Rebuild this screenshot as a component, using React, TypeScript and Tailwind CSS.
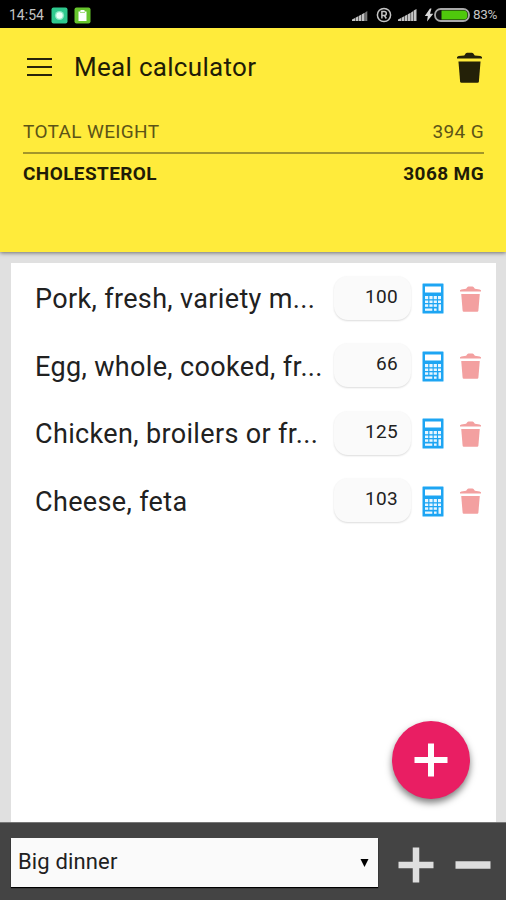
import { useState } from "react";

interface MealItem {
  id: number; name: string; grams: string;
}

const initialItems: MealItem[] = [
  { id: 1, name: "Pork, fresh, variety m...", grams: "100" },
  { id: 2, name: "Egg, whole, cooked, fr...", grams: "66" },
  { id: 3, name: "Chicken, broilers or fr...", grams: "125" },
  { id: 4, name: "Cheese, feta", grams: "103" },
];

function SignalIcon({ empty }: { empty?: boolean }) {
  return (
    <svg width="19" height="14" viewBox="0 0 19 14" fill="#c4c4c4">
      <path d="M0 13v-1.500L3 10v3zM3.500 13V9.700L6.200 8.300V13zM6.700 13V8L9.400 6.500V13zM9.900 13V6.200L12.600 4.700V13z" />
      <path d="M13.100 13V4.400L15.300 3v10z" fill={empty ? "#777" : "#c4c4c4"} />
      {!empty && <path d="M15.700 13V2.600L18.500 1v12z" />}
    </svg>
  );
}

function TrashIcon({ className }: { className: string }) {
  return (
    <svg className={className} viewBox="0 0 24 30" preserveAspectRatio="none" fill="currentColor">
      <path d="M0 6.400V4.900L1.500 3.900L7 3.300L8.500 1.200Q9 .7 9.700 .7h4.600q.7 0 1.200 .5l1.500 2.100l5.500 .6L24 4.900v1.500z" />
      <path d="M1.400 9.200h21.200l-1.600 19.300q-.1 1.200-1.300 1.200H4.300q-1.200 0-1.300-1.200z" />
    </svg>
  );
}

function CalculatorIcon() {
  return (
    <svg width="22" height="31" viewBox="0 0 22 31">
      <rect x="0.500" y="0.500" width="21" height="30" rx="0.500" fill="#1da5f3" />
      <g fill="#e8f6ff">
        <rect x="3" y="3.500" width="16" height="6" fill="#fff" />
        <rect x="3" y="13" width="3.200" height="3.200" />
        <rect x="7.400" y="13" width="3.200" height="3.200" />
        <rect x="11.700" y="13" width="3.200" height="3.200" />
        <rect x="16" y="13" width="3" height="3.200" />
        <rect x="3" y="17.500" width="3.200" height="2.500" />
        <rect x="7.400" y="17.500" width="3.200" height="2.500" />
        <rect x="11.700" y="17.500" width="3.200" height="2.500" />
        <rect x="16" y="17.500" width="3" height="2.500" />
        <rect x="3" y="21.300" width="3.200" height="2.500" />
        <rect x="7.400" y="21.300" width="3.200" height="2.500" />
        <rect x="11.700" y="21.300" width="3.200" height="2.500" />
        <rect x="3" y="25.500" width="7.300" height="2.300" />
        <rect x="12" y="25.500" width="2.600" height="2.300" />
        <rect x="16.500" y="21.300" width="2.500" height="6.500" />
      </g>
    </svg>
  );
}

function StatusBar() {
  return (
    <div className="h-7 bg-black flex items-center pl-[9px] pr-[7px] pt-[2px] text-[#c4c4c4]">
      <span className="w-[36px] mr-[6px] text-[14px] leading-none whitespace-nowrap">14:54</span>
      <svg className="mr-[6px]" width="17" height="17" viewBox="0 0 17 17">
        <rect x="0.500" y="0.500" width="16" height="16" rx="2" fill="#2fc98e" />
        <circle cx="8.500" cy="8.500" r="4.600" fill="#8be8c4" />
        <circle cx="8.500" cy="8.500" r="3.200" fill="#e6fff5" />
      </svg>
      <svg width="17" height="17" viewBox="0 0 17 17">
        <rect x="0.500" y="0.500" width="16" height="16" rx="2" fill="#67c52d" />
        <path d="M4.500 4.500h2V3h4v1.500h2v9.500h-8z" fill="#fff" />
        <path d="M6 5.500h5" stroke="#a5df80" strokeWidth="1" />
      </svg>
      <div className="flex-1" />
      <SignalIcon empty />
      <svg className="ml-[5px] mr-[6px]" width="16" height="16" viewBox="0 0 16 16" fill="none" stroke="#c4c4c4">
        <circle cx="8" cy="8" r="6.600" strokeWidth="1.500" />
        <path d="M5.900 11.500v-7h2.400a2 2 0 0 1 0 4H5.900M8.400 8.500l1.900 3" strokeWidth="1.500" />
      </svg>
      <SignalIcon />
      <svg className="ml-[7px]" width="10" height="14" viewBox="0 0 10 14" fill="#d8d8d8">
        <path d="M6 0.500L0.800 8h3L3 13.500 9.300 5.800H6L7.500 0.500z" />
      </svg>
      <svg className="mr-[3px]" width="36" height="14" viewBox="0 0 36 14">
        <rect x="1" y="1" width="34" height="12" rx="5.800" fill="#111" stroke="#a9a9a9" strokeWidth="1.800" />
        <path d="M7.500 2.500h22q4 0 4 4.500t-4 4.500h-22z" fill="#4fc80c" />
      </svg>
      <span className="w-[26px] text-[13.500px] leading-none tracking-[-0.3px]">83%</span>
    </div>
  );
}

export default function App() {
  const [items, setItems] = useState<MealItem[]>(initialItems);

  function updateGrams(id: number, grams: string) {
    setItems(items.map((item) => (item.id === id ? { ...item, grams } : item)));
  }

  function removeItem(id: number) {
    setItems(items.filter((item) => item.id !== id));
  }

  return (
    <div className="relative w-[506px] h-[900px] overflow-hidden flex flex-col bg-[#e0e0e0] font-['Roboto',sans-serif]">
      <StatusBar />

      {/* Header with totals */}
      <header className="relative h-[224px] shrink-0 bg-[#ffeb3b] shadow-[0_1px_4px_rgba(0,0,0,0.5)] text-[#1f1c07]">
        <div className="h-[78px] flex items-center pl-[27px] pr-[24px]">
          <button aria-label="Menu" className="w-[25px] h-[18px] flex flex-col justify-between">
            <span className="h-[2px] w-full bg-[#27240a]" />
            <span className="h-[2px] w-full bg-[#27240a]" />
            <span className="h-[2px] w-full bg-[#27240a]" />
          </button>
          <h1 className="flex-1 ml-[22px] text-[26px] leading-none tracking-[0.3px]">Meal calculator</h1>
          <button aria-label="Clear meal" onClick={() => setItems([])}>
            <TrashIcon className="w-[25px] h-[31px] text-[#242108]" />
          </button>
        </div>
        <div className="ml-[23px] mr-[22px] text-[19px]">
          <div className="h-[48px] pt-[6px] flex items-center justify-between border-b-2 border-[#a3962a] text-[#5c5417] tracking-[0.35px]">
            <span>TOTAL WEIGHT</span>
            <span>394 G</span>
          </div>
          <div className="h-[40px] flex items-center justify-between font-bold tracking-[0.4px]">
            <span>CHOLESTEROL</span>
            <span>3068 MG</span>
          </div>
        </div>
      </header>

      {/* Meal items */}
      <main className="flex-1 mt-[11px] ml-[11px] mr-[10px] bg-white pt-[2px]">
        {items.map((item) => (
          <div key={item.id} className="h-[67.5px] flex items-center pl-[24px] pr-[15px]">
            <span className="flex-1 pt-[2px] text-[27px] leading-none tracking-[0.35px] whitespace-nowrap text-[#212121]">{item.name}</span>
            <input value={item.grams} onChange={(e) => updateGrams(item.id, e.target.value)}
              className="w-[77px] h-[44px] mt-[-2px] mr-[11px] pr-[13px] pb-[3px] rounded-[14px] bg-[#fafafa] text-right text-[19px] tracking-[0.3px] text-[#212121] shadow-[0_1px_2px_rgba(0,0,0,0.14)]" />
            <button aria-label="Calculate" className="mr-[16px]"><CalculatorIcon /></button>
            <button aria-label="Remove" onClick={() => removeItem(item.id)}>
              <TrashIcon className="w-[21px] h-[26px] text-[#f3a0a0]" />
            </button>
          </div>
        ))}
      </main>

      {/* Floating add button */}
      <button aria-label="Add food"
        className="absolute left-[392px] top-[721px] size-[78px] rounded-full bg-[#e91e63] flex items-center justify-center shadow-[0_4px_7px_rgba(0,0,0,0.5)]">
        <svg width="34" height="34" viewBox="0 0 34 34" stroke="#fff" strokeWidth="6">
          <path d="M17 0.500v33M0.500 17h33" />
        </svg>
      </button>

      {/* Meal picker */}
      <footer className="h-[78px] shrink-0 bg-[#444] border-t border-[#777] flex items-center pl-[11px] pr-[15px]">
        <button className="w-[367px] h-[49px] mt-[2px] flex items-center justify-between pl-[7px] pr-[9px] bg-[#fafafa] shadow-[0_1px_1px_#000] text-[22px] tracking-[0.15px] text-[#212121]">
          <span className="pb-[2px]">Big dinner</span>
          <svg width="9" height="8" viewBox="0 0 9 8"><path d="M0.500 0h8l-4 8z" fill="#000" /></svg>
        </button>
        <svg className="ml-[20px] mt-[7px]" width="36" height="36" viewBox="0 0 36 36" stroke="#dedede" strokeWidth="6.500">
          <path d="M18 0.500v35M0.500 18h35" />
        </svg>
        <svg className="ml-[21px] mt-[7px]" width="36" height="36" viewBox="0 0 36 36" stroke="#dedede" strokeWidth="7.500">
          <path d="M0.500 18h35" />
        </svg>
      </footer>
    </div>
  );
}
